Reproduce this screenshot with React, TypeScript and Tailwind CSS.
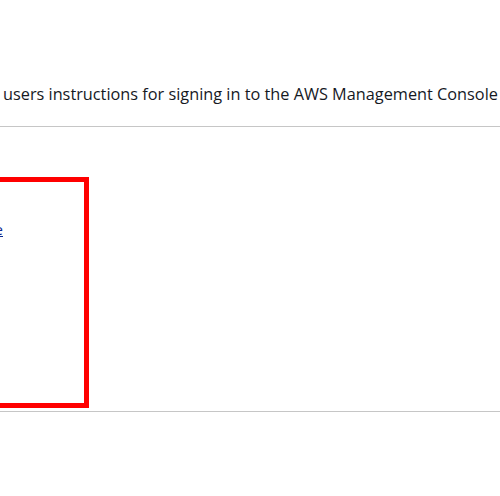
export default function App() {
  return (
    <div className="relative h-[496px] w-[500px] overflow-hidden bg-white font-['Open_Sans',sans-serif] text-[#16191f]">
      <div className="h-[83px]" />
      <p className="pl-[3px] whitespace-nowrap text-[16.3px] leading-[22px]">
        users instructions for signing in to the AWS Management Console
      </p>
      <div className="h-[21px]" />
      <div className="h-px bg-[#c6c6c6]" />

      <div className="h-[50px]" />
      <div className="-ml-[20px] h-[231px] w-[109px] border-[5px] border-[#ff0000]">
        <div className="h-[37px]" />
        <div className="flex justify-end pr-[81px]">
          <a className="whitespace-nowrap text-[15px] leading-[20px] text-[#0d2a8f] underline">
            Console sign-in URL: https://console.aws.amazon.com/console/home
          </a>
        </div>
      </div>
      <div className="h-[3px]" />
      <div className="h-px bg-[#c6c6c6]" />
    </div>
  )
}
